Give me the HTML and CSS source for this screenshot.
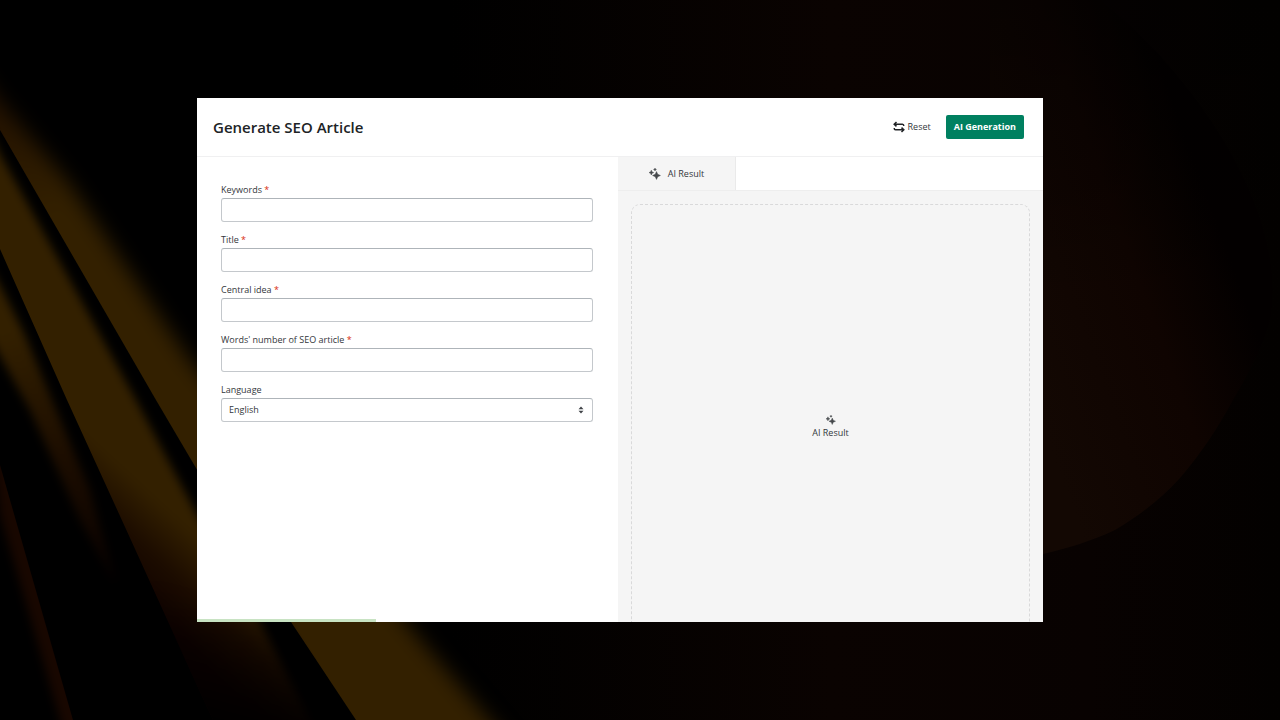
FILE: index.html
```html
<!DOCTYPE html>
<html lang="en">
<head>
<meta charset="utf-8">
<meta name="viewport" content="width=device-width, initial-scale=1">
<title>Generate SEO Article</title>
<link rel="stylesheet" href="styles.css">
</head>
<body>
<svg class="backdrop" viewBox="0 0 1280 720" preserveAspectRatio="none" aria-hidden="true">
  <defs>
    <filter id="soft" x="-20%" y="-20%" width="140%" height="140%" color-interpolation-filters="sRGB"><feGaussianBlur stdDeviation="10"/></filter>
    <filter id="fine" x="-20%" y="-20%" width="140%" height="140%" color-interpolation-filters="sRGB"><feGaussianBlur stdDeviation="5"/></filter>
    <clipPath id="edge-a"><path d="M0 130 156 400 196 468 291 622 356 720H1280V0H0Z"/></clipPath>
    <clipPath id="edge-b"><path d="M0 249 67 400 125 527 200 692 213 720H1280V0H0Z"/></clipPath>
    <clipPath id="edge-d"><path d="M0 465 73 720H0Z"/></clipPath>
    <linearGradient id="fade-a" gradientUnits="userSpaceOnUse" x1="0" y1="100" x2="60" y2="210"><stop offset="0" stop-color="#221100"/><stop offset="1" stop-color="#332000"/></linearGradient>
    <linearGradient id="fade-b" gradientUnits="userSpaceOnUse" x1="185" y1="525" x2="125" y2="590"><stop offset="0" stop-color="#332000"/><stop offset=".5" stop-color="#1c0c00"/><stop offset="1" stop-color="#100200"/></linearGradient>
    <linearGradient id="fade-b2" gradientUnits="userSpaceOnUse" x1="250" y1="610" x2="220" y2="720"><stop offset="0" stop-color="#000" stop-opacity="0"/><stop offset="1" stop-color="#000" stop-opacity=".9"/></linearGradient>
    <linearGradient id="fade-c" gradientUnits="userSpaceOnUse" x1="10" y1="330" x2="110" y2="590"><stop offset="0" stop-color="#332000"/><stop offset=".5" stop-color="#1c0d00"/><stop offset="1" stop-color="#080000"/></linearGradient>
    <linearGradient id="orb" gradientUnits="userSpaceOnUse" x1="1040" y1="420" x2="1260" y2="340"><stop offset="0" stop-color="#130803"/><stop offset=".6" stop-color="#0f0401"/><stop offset="1" stop-color="#030000"/></linearGradient>
    <linearGradient id="orb-top" gradientUnits="userSpaceOnUse" x1="0" y1="0" x2="0" y2="300"><stop offset="0" stop-color="#000" stop-opacity=".5"/><stop offset="1" stop-color="#000" stop-opacity="0"/></linearGradient>
    <linearGradient id="base" x1="0" x2="1"><stop offset=".35" stop-color="#000"/><stop offset=".65" stop-color="#0a0301"/><stop offset=".85" stop-color="#080201"/><stop offset="1" stop-color="#030100"/></linearGradient>
  </defs>
  <rect width="1280" height="720" fill="url(#base)"/>
  <path d="M990 0H1100C1190 70 1290 210 1270 320 1262 350 1245 380 1233 400 1218 428 1200 455 1180 478 1160 500 1140 515 1115 530 1092 541 1068 548 1043 554H990Z" fill="url(#orb)"/>
  <rect x="990" width="290" height="300" fill="url(#orb-top)"/>
  <g clip-path="url(#edge-a)"><path d="M-30 60 0 100 67 180 190 360 425 645 520 755 330 750 120 420-30 160Z" fill="url(#fade-a)" filter="url(#soft)"/></g>
  <g clip-path="url(#edge-b)">
    <path d="M-30 90 0 154 60 262 136 400 193 507 260 622 325 750H150L60 500-40 250Z" fill="url(#fade-b)" filter="url(#fine)"/>
    <path d="M130 590 260 580 350 740H190Z" fill="url(#fade-b2)" filter="url(#fine)"/>
  </g>
  <path d="M-20 250 0 285 25 335 52 400 90 490 116 585 80 520 30 410-20 320Z" fill="url(#fade-c)" filter="url(#fine)"/>
  <g clip-path="url(#edge-d)"><path d="M-10 430 10 450 90 740H66L0 515Z" fill="#180700" filter="url(#fine)"/></g>
</svg>
<svg class="symbols" aria-hidden="true">
  <symbol id="sparkles" viewBox="0 0 12 12">
    <path d="M7.500 3.600 8.700 6.300 11.400 7.500 8.700 8.700 7.500 11.400 6.300 8.700 3.600 7.500 6.300 6.300ZM2.300 2.200 3.100 3.900 4.700 4.600 3.100 5.300 2.300 7 1.600 5.300 0 4.600 1.600 3.900ZM6 .2 6.500 1.100 7.400 1.500 6.500 2 6 2.800 5.500 2 4.600 1.500 5.500 1.100Z" fill="currentColor" stroke="currentColor" stroke-width=".5"/>
  </symbol>
</svg>
<main class="stage">
  <section class="dialog">
    <header class="dialog-header">
      <h1 class="dialog-title">Generate SEO Article</h1>
      <button class="reset" type="button">
        <svg class="reset-icon" viewBox="0 0 12 12" aria-hidden="true"><path d="M3.500 1 1.200 3.200 3.500 5.400M1.200 3.200H9.500Q10.800 3.200 10.800 5M8.500 6.600 10.800 8.800 8.500 11M10.800 8.800H2.500Q1.200 8.800 1.200 7" fill="none" stroke="currentColor" stroke-width="1.500"/></svg>
        Reset
      </button>
      <button class="generate" type="submit" form="article-form">AI Generation</button>
    </header>
    <div class="dialog-body">
      <form class="form" id="article-form">
        <div class="field"><label for="keywords">Keywords <span class="required">*</span></label><input class="control" id="keywords" type="text"></div>
        <div class="field"><label for="title">Title <span class="required">*</span></label><input class="control" id="title" type="text"></div>
        <div class="field"><label for="idea">Central idea <span class="required">*</span></label><input class="control" id="idea" type="text"></div>
        <div class="field"><label for="words">Words' number of SEO article <span class="required">*</span></label><input class="control" id="words" type="text"></div>
        <div class="field">
          <label for="language">Language</label>
          <div class="select-wrap">
            <select class="control select" id="language"><option>English</option></select>
            <svg class="select-icon" viewBox="0 0 6 8" aria-hidden="true"><path d="M3 .5 5.500 3.300H.5ZM3 7.500 .5 4.700H5.500Z" fill="currentColor"/></svg>
          </div>
        </div>
      </form>
      <section class="result">
        <div class="tabs"><button class="tab" type="button"><svg class="tab-icon"><use href="#sparkles"/></svg>AI Result</button></div>
        <div class="result-area">
          <div class="result-empty"><svg class="empty-icon"><use href="#sparkles"/></svg><span>AI Result</span></div>
        </div>
      </section>
    </div>
    <div class="progress"></div>
  </section>
</main>
</body>
</html>
```
FILE: styles.css
```css
* { box-sizing: border-box; }
body {
  margin: 0;
  background: #000;
  color: #33373b;
  font: 9px/16px "Open Sans", "Noto Sans", sans-serif;
}
button, input, select { font: inherit; color: inherit; }
.backdrop { position: fixed; inset: 0; width: 100%; height: 100%; z-index: -1; }
.symbols { position: absolute; width: 0; height: 0; }
.stage { display: flex; min-height: 100vh; padding: 98px 237px 98px 197px; }
.dialog {
  position: relative;
  display: flex;
  flex: 1;
  flex-direction: column;
  background: #fff;
  overflow: hidden;
}
.dialog-header {
  display: flex;
  align-items: center;
  min-height: 59px;
  padding: 0 19px 0 16px;
  border-bottom: 1px solid #f0f0f1;
}
.dialog-title { flex: 1; margin: 0; color: #202326; font-size: 15px; font-weight: 600; line-height: 20px; }
.reset {
  display: flex;
  align-items: center;
  gap: 3px;
  margin-right: 15px;
  padding: 0;
  border: 0;
  background: none;
}
.reset-icon { width: 12px; height: 12px; color: #202326; }
.generate {
  height: 24px;
  padding: 0 8px;
  border: 0;
  border-radius: 2px;
  background: #008060;
  color: #fff;
  font-weight: 700;
}
.dialog-body { display: grid; flex: 1; grid-template-columns: 421px minmax(0, 1fr); }
.form { display: flex; flex-direction: column; gap: 10px; padding: 25px 25px 24px 24px; }
.field { display: flex; flex-direction: column; }
.required { color: #d72c0d; }
.control {
  width: 100%;
  height: 24px;
  padding: 0 8px;
  border: 1px solid #c4c8cc;
  border-top-color: #aeb4b9;
  border-radius: 3px;
  background: #fff;
}
.select-wrap { position: relative; display: flex; }
.select { appearance: none; padding: 0 7px; }
.select-icon { position: absolute; top: 8px; right: 9px; width: 6px; height: 8px; color: #3f4347; pointer-events: none; }
.result { display: flex; flex-direction: column; background: #f5f5f5; }
.tabs { display: flex; background: #fff; border-bottom: 1px solid #eee; }
.tab {
  display: flex;
  align-items: center;
  justify-content: center;
  gap: 7px;
  width: 118px;
  height: 33px;
  padding: 1px 0 0;
  border: 0;
  border-right: 1px solid #eaeaea;
  background: #f5f5f5;
}
.tab-icon { width: 12px; height: 12px; color: #45484b; }
.result-area { display: flex; flex: 1; padding: 13px 13px 0; }
.result-empty {
  display: flex;
  flex: 1;
  flex-direction: column;
  align-items: center;
  justify-content: center;
  padding-top: 28px;
  border: 1px dashed #d9d9da;
  border-bottom: 0;
  border-radius: 9px 9px 0 0;
}
.empty-icon { width: 10px; height: 10px; color: #45484b; }
.progress { position: absolute; bottom: 0; left: 0; width: 179px; height: 3px; background: #c8e3c3; }
```
